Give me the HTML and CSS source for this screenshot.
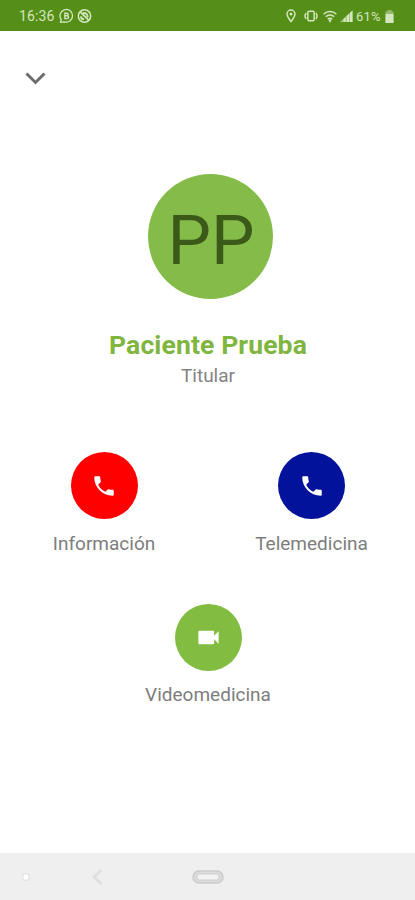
FILE: index.html
```html
<!DOCTYPE html>
<html lang="es">
<head>
<meta charset="utf-8">
<title>Paciente Prueba</title>
<link rel="stylesheet" href="styles.css">
</head>
<body>
<div class="screen">
  <header class="status">
    <span class="time">16:36</span>
    <svg class="badge-b" width="15" height="16" viewBox="0 0 15 16" fill="none" stroke="currentColor"><path d="M1.500 14.200L2.200 11.500A6.300 6.300 0 1 1 5.500 13.800z" stroke-width="1.300"/><path d="M5.900 5.200h1.900a1.300 1.300 0 0 1 0 2.600H5.900zM5.900 7.800h2.200a1.400 1.400 0 0 1 0 2.800H5.900z" stroke-width="1.400"/></svg>
    <svg class="badge-n" width="15" height="16" viewBox="0 0 15 16" fill="none" stroke="currentColor"><circle cx="7.500" cy="8" r="6.200" stroke-width="1.500"/><path d="M3.300 3.800l8.400 8.400M6 4.800c3 0 4.700 1.700 4.700 4.500M4 8.200c0 2 .8 3 3 3" stroke-width="1.800"/></svg>
    <div class="spacer"></div>
    <svg class="pin" width="10" height="14" viewBox="0 0 10 14" fill="none" stroke="currentColor"><path d="M5 12.500C3 9.800 1 7.400 1 5a4 4 0 0 1 8 0c0 2.400-2 4.800-4 7.500z" stroke-width="1.500"/><circle cx="5" cy="5" r="1.500" fill="currentColor" stroke="none"/></svg>
    <svg class="vibrate" width="14" height="12" viewBox="0 0 14 12" fill="none" stroke="currentColor"><rect x="3.800" y="1.200" width="6.400" height="9.600" rx="1.500" stroke-width="1.500"/><path d="M2 3L.9 6 2 9M12 3l1.100 3L12 9" stroke-width="1.500"/></svg>
    <svg class="wifi" width="14" height="13" viewBox="0 0 14 13" fill="none" stroke="currentColor"><path d="M.6 4.200a9 9 0 0 1 12.800 0M2.800 6.800a5.800 5.800 0 0 1 8.400 0M4.800 9.200a3 3 0 0 1 4.400 0" stroke-width="1.500"/><path d="M5.200 9.600h3.600L7 13z" fill="currentColor" stroke="none"/></svg>
    <svg class="signal" width="13" height="12" viewBox="0 0 13 12" fill="currentColor"><path d="M0 12L12.500.5V12z" opacity=".6"/><path d="M3.500 8.800L5.500 7v5h-2zM6.700 5.800L9 3.700V12H6.700zM10 2.800L12.500.5V12H10z"/></svg>
    <span class="percent">61%</span>
    <svg class="battery" width="9" height="13" viewBox="0 0 9 13" fill="currentColor"><path d="M2.500 0h4v1.500h2V13h-8V1.500h2z" opacity=".5"/><path d="M.5 4h8v9h-8z"/></svg>
  </header>

  <main class="content">
    <svg class="chevron" width="21" height="13" viewBox="0 0 21 13" fill="none" stroke="currentColor" stroke-width="3"><path d="M1.500 1.500l9 9 9-9"/></svg>
    <div class="avatar">PP</div>
    <h1 class="name">Paciente Prueba</h1>
    <p class="role">Titular</p>

    <div class="actions">
      <div class="action">
        <div class="disc red"><svg width="26" height="26" viewBox="0 0 24 24" fill="currentColor"><path d="M6.620 10.790c1.440 2.830 3.760 5.140 6.590 6.590l2.200-2.200c.27-.27.670-.36 1.020-.24 1.120.37 2.330.57 3.570.57.550 0 1 .45 1 1V20c0 .55-.45 1-1 1-9.390 0-17-7.610-17-17 0-.55.45-1 1-1h3.500c.55 0 1 .45 1 1 0 1.250.2 2.450.57 3.570.11.350.03.740-.25 1.020l-2.200 2.200z"/></svg></div>
        <span class="label">Información</span>
      </div>
      <div class="action">
        <div class="disc blue"><svg width="26" height="26" viewBox="0 0 24 24" fill="currentColor"><path d="M6.620 10.790c1.440 2.830 3.760 5.140 6.590 6.590l2.200-2.200c.27-.27.670-.36 1.020-.24 1.120.37 2.330.57 3.570.57.550 0 1 .45 1 1V20c0 .55-.45 1-1 1-9.390 0-17-7.610-17-17 0-.55.45-1 1-1h3.500c.55 0 1 .45 1 1 0 1.250.2 2.450.57 3.570.11.350.03.740-.25 1.020l-2.200 2.200z"/></svg></div>
        <span class="label">Telemedicina</span>
      </div>
      <div class="action wide">
        <div class="disc green"><svg width="27" height="27" viewBox="0 0 24 24" fill="currentColor"><path d="M17 10.500V7c0-.55-.45-1-1-1H4c-.55 0-1 .45-1 1v10c0 .55.450 1 1 1h12c.55 0 1-.45 1-1v-3.500l4 4v-11l-4 4z"/></svg></div>
        <span class="label">Videomedicina</span>
      </div>
    </div>
  </main>

  <footer class="nav">
    <svg class="dot" width="8" height="8" viewBox="0 0 8 8"><rect x=".75" y=".75" width="6.500" height="6.500" rx="2" fill="#fff" stroke="#e4e4e4" stroke-width="1.500"/></svg>
    <svg class="back" width="11" height="16" viewBox="0 0 11 16" fill="none" stroke="#dedede" stroke-width="2.500"><path d="M9.500 1L2 8l7.500 7"/></svg>
    <svg class="home" width="32" height="14" viewBox="0 0 32 14" fill="none"><rect x="1" y="1" width="30" height="12" rx="6" fill="#dcdcdc" stroke="#cbcbcb" stroke-width="1.500"/><rect x="5" y="4" width="22" height="6" rx="2" fill="#f3f3f3" stroke="#cdcdcd"/></svg>
  </footer>
</div>
</body>
</html>
```
FILE: styles.css
```css
* { box-sizing: border-box; }

body {
  margin: 0;
  background: #fff;
  font-family: Roboto, "Liberation Sans", sans-serif;
}

.screen {
  width: 415px;
  height: 900px;
  display: flex;
  flex-direction: column;
  overflow: hidden;
}

.status {
  height: 31px;
  flex: none;
  display: flex;
  align-items: center;
  padding: 1px 21px 0 19px;
  background: #568f18;
  color: #d3e6bd;
  font-size: 14px;
}

.status svg { flex: none; }
.time { width: 40px; letter-spacing: 0.1px; }
.badge-n { margin-left: 3px; }
.spacer { flex: 1; }
.vibrate { margin-left: 8px; }
.wifi { margin-left: 5px; }
.signal { margin-left: 3px; }
.percent { width: 26px; margin-left: 3px; font-size: 13px; letter-spacing: 0.2px; }
.battery { margin-left: 3px; }

.content {
  flex: 1;
  display: flex;
  flex-direction: column;
  align-items: center;
}

.chevron {
  align-self: flex-start;
  margin: 41px 0 0 25px;
  color: #6d6d6d;
}

.avatar {
  width: 125px;
  height: 125px;
  margin: 89px 0 0 5px;
  padding-left: 2px;
  border-radius: 50%;
  background: #85bc49;
  color: #3b5a19;
  font-size: 69px;
  line-height: 133px;
  text-align: center;
}

.name {
  margin: 29px 0 0 1px;
  color: #80b540;
  font-size: 26.5px;
  line-height: 34px;
  font-weight: 700;
  letter-spacing: 0.13px;
  white-space: nowrap;
}

.role {
  margin: 2px 0 0 1px;
  color: #848484;
  font-size: 19px;
  line-height: 24px;
}

.actions {
  width: 415px;
  margin-top: 64.4px;
  display: grid;
  grid-template-columns: 208px 207px;
  row-gap: 48px;
}

.action {
  display: flex;
  flex-direction: column;
  align-items: center;
}

.wide {
  grid-column: 1 / -1;
  padding-left: 1px;
}

.disc {
  width: 67px;
  height: 67px;
  border-radius: 50%;
  display: flex;
  align-items: center;
  justify-content: center;
  color: #fff;
}

.red { background: #fe0000; }
.blue { background: #03129a; }
.green { background: #82bd42; }

.label {
  margin-top: 12.4px;
  color: #7d7d7d;
  font-size: 19px;
  line-height: 24px;
}

.nav {
  height: 47px;
  flex: none;
  display: flex;
  align-items: center;
  padding-left: 22px;
  background: #efefef;
}

.back { margin-left: 62px; }
.home { margin-left: 89px; }
```
